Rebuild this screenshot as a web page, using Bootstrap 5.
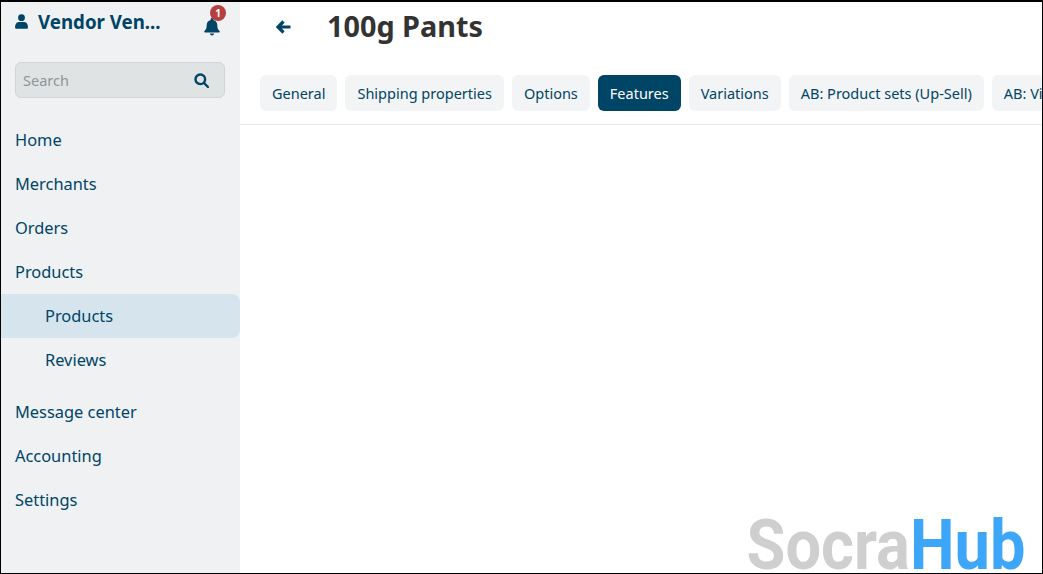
<!DOCTYPE html>
<html lang="en">
<head>
<meta charset="UTF-8">
<title>100g Pants</title>
<link href="https://cdn.jsdelivr.net/npm/bootstrap@5.3.0/dist/css/bootstrap.min.css" rel="stylesheet">
<script src="https://cdn.jsdelivr.net/npm/bootstrap@5.3.0/dist/js/bootstrap.bundle.min.js"></script>
<style>
html, body { height: 100%; overflow: hidden; }
body { font-family: "Noto Sans", sans-serif; color: #004466; background: #fff; }
.frame { height: 574px; border: 1px solid #000; border-top-width: 2px; position: relative; overflow: hidden; }
.side { width: 239px; background: #eff1f3; flex: none; }
.vendor-row { height: 40px; padding: 0 20px 0 14px; }
.vendor-name { font-size: 18.700px; font-weight: 700; gap: 10px; }
.bell-wrap { position: relative; width: 16px; height: 18px; }
.bell-count { position: absolute; top: -8px; left: 6px; width: 16px; height: 16px; border-radius: 50%; background: #b53f3f; color: #fff; font-size: 10px; font-weight: 700; line-height: 16px; text-align: center; }
.side-search { margin: 20px 15px 20px 14px; height: 36px; background: #dfe3e4; border: 1px solid #cfd4d6; border-radius: 6px; padding: 0 15px 0 7px; font-size: 14.500px; color: #8f9597; }
.side-search span { padding-top: 2px; }
.side-link { display: block; height: 44px; line-height: 44px; padding-left: 14px; font-size: 16.400px; color: #004466; text-decoration: none; }
.side-link.sub { padding-left: 44px; }
.side-link.current { background: #d6e4ed; border-radius: 0 8px 8px 0; }
.side-gap { height: 8px; }
.page-head { height: 49px; padding-left: 36px; }
.page-title { font-size: 28.800px; font-weight: 700; color: #333; margin: 0 0 0 36px; }
.tab-row { padding: 24px 0 13px 20px; border-bottom: 1px solid #e4e7e9; flex-wrap: nowrap; white-space: nowrap; }
.tab-item { height: 36px; line-height: 36px; padding: 0 12px; font-size: 14.500px; background: #f3f4f5; border-radius: 6px; color: #004466; text-decoration: none; flex: none; }
.tab-item.current { background: #004466; color: #fff; }
.wmark { position: absolute; right: 17px; bottom: 0; font-family: "Roboto", sans-serif; font-size: 71px; font-weight: 700; line-height: 56px; height: 56px; color: #cfcfcf; transform: scaleX(.89); transform-origin: right center; }
.wmark span { color: #3ea6f8; }
</style>
</head>
<body>
<div class="frame d-flex">
  <nav class="side">
    <div class="vendor-row d-flex align-items-center justify-content-between">
      <div class="d-flex align-items-center vendor-name">
        <svg width="13" height="15" viewBox="0 0 13 15" fill="#004466"><circle cx="6.5" cy="3.7" r="3.4"/><path d="M0 13.2C0 9.8 2 8 4 8h5c2 0 4 1.8 4 5.2 0 1-.7 1.6-1.6 1.6H1.6C.7 14.800 0 14.200 0 13.200z"/></svg>
        <span>Vendor Ven...</span>
      </div>
      <div class="bell-wrap">
        <svg width="16" height="18" viewBox="0 0 16 18" fill="#004466"><path d="M8 0c.8 0 1.300.6 1.300 1.300v.6C11.700 2.400 13.300 4.400 13.300 7c0 3.700 1 4.700 2.200 6 .6.700.2 1.600-.7 1.600H1.200c-.9 0-1.300-.9-.7-1.600C1.700 11.700 2.700 10.700 2.700 7c0-2.600 1.600-4.600 4-5.100v-.6C6.700.6 7.200 0 8 0zM6 15.500h4a2 2 0 0 1-4 0z"/></svg>
        <span class="bell-count">1</span>
      </div>
    </div>
    <div class="side-search d-flex align-items-center justify-content-between">
      <span>Search</span>
      <svg width="15" height="15" viewBox="0 0 15 15" fill="none" stroke="#004466" stroke-width="2.400"><circle cx="6.300" cy="6.300" r="4.800"/><path d="M10 10l4 4" stroke-linecap="round"/></svg>
    </div>
    <a class="side-link" href="#">Home</a>
    <a class="side-link" href="#">Merchants</a>
    <a class="side-link" href="#">Orders</a>
    <a class="side-link" href="#">Products</a>
    <a class="side-link sub current" href="#">Products</a>
    <a class="side-link sub" href="#">Reviews</a>
    <div class="side-gap"></div>
    <a class="side-link" href="#">Message center</a>
    <a class="side-link" href="#">Accounting</a>
    <a class="side-link" href="#">Settings</a>
  </nav>
  <main class="flex-grow-1 overflow-hidden">
    <div class="page-head d-flex align-items-center">
      <svg width="15" height="14" viewBox="0 0 15 14" fill="none" stroke="#004466" stroke-width="3.200"><path d="M7.500 1.500L2 7l5.500 5.500M2.500 7h12"/></svg>
      <h1 class="page-title">100g Pants</h1>
    </div>
    <div class="tab-row d-flex gap-2">
      <a class="tab-item" href="#">General</a>
      <a class="tab-item" href="#">Shipping properties</a>
      <a class="tab-item" href="#">Options</a>
      <a class="tab-item current" href="#">Features</a>
      <a class="tab-item" href="#">Variations</a>
      <a class="tab-item" href="#">AB: Product sets (Up-Sell)</a>
      <a class="tab-item" href="#">AB: Video gallery</a>
    </div>
  </main>
  <div class="wmark">Socra<span>Hub</span></div>
</div>
</body>
</html>
